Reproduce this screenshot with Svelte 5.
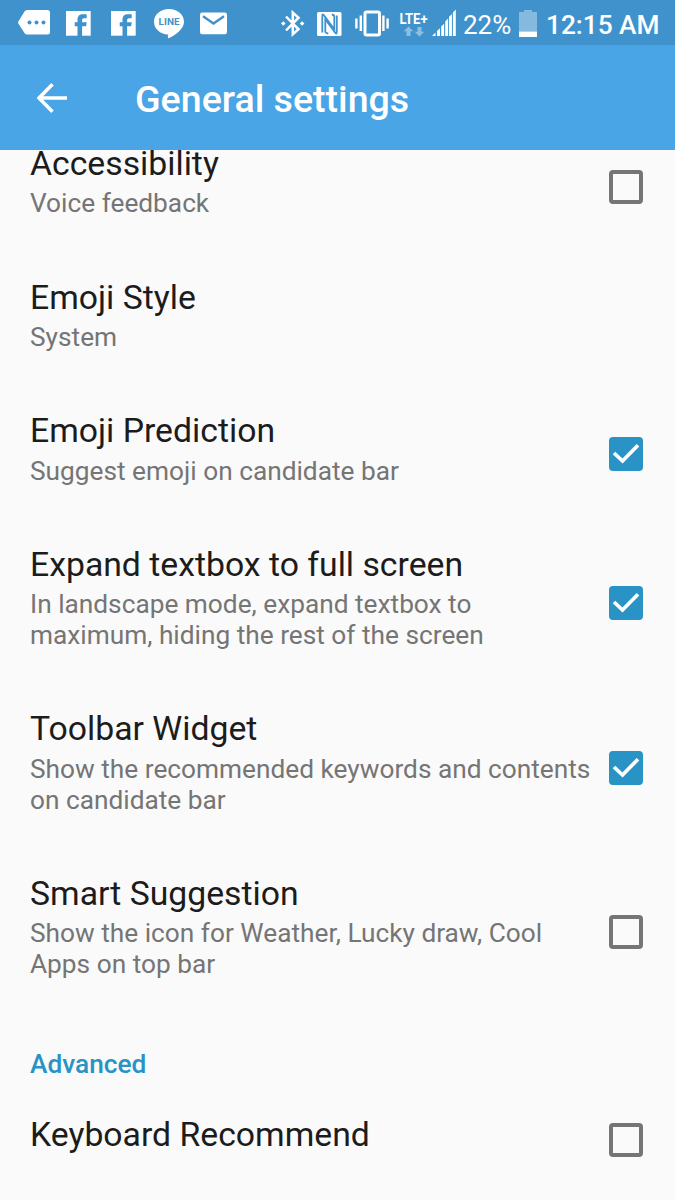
<script lang="ts">
  let settings = $state([
    { title: 'Accessibility', summary: 'Voice feedback', checked: false },
    { title: 'Emoji Style', summary: 'System' },
    { title: 'Emoji Prediction', summary: 'Suggest emoji on candidate bar', checked: true },
    { title: 'Expand textbox to full screen', summary: 'In landscape mode, expand textbox to\nmaximum, hiding the rest of the screen', checked: true },
    { title: 'Toolbar Widget', summary: 'Show the recommended keywords and contents\non candidate bar', checked: true },
    { title: 'Smart Suggestion', summary: 'Show the icon for Weather, Lucky draw, Cool\nApps on top bar', checked: false }
  ]);

  let advanced = $state([
    { title: 'Keyboard Recommend', summary: '', checked: false }
  ]);
</script>

{#snippet facebook()}
  <svg class="fb" width="25" height="45" viewBox="0 0 25 45">
    <rect y="11" width="24.700" height="24.700" fill="#fff" />
    <path fill="#3f92cc" d="M11.500 36V26.300H8.700v-4h2.800v-2.800c0-3.400 2-5.300 5.300-5.300h3.900v4h-2.500c-1.500 0-2.100.7-2.100 2v2.100h4.600l-.6 4h-4V36z" />
  </svg>
{/snippet}

{#snippet row(item)}
  <li class="row">
    <div class="text">
      <div class="title">{item.title}</div>
      {#if item.summary}
        <div class="summary">{item.summary}</div>
      {/if}
    </div>
    {#if item.checked !== undefined}
      <button
        class={["check", item.checked ? "on" : ""]}
        role="checkbox"
        aria-checked={item.checked}
        aria-label={item.title}
        onclick={() => item.checked = !item.checked}
      >
        {#if item.checked}
          <svg width="34" height="34" viewBox="0 0 34 34">
            <path fill="none" stroke="#fff" stroke-width="3.700" d="M5 16l8.500 8L29 8.200" />
          </svg>
        {/if}
      </button>
    {/if}
  </li>
{/snippet}

<div class="screen">
  <div class="status">
    <svg class="message" width="32" height="45" viewBox="18 0 32 45">
      <path fill="#fff" d="M27 10h20.500q2.500 0 2.500 2.500V32q0 2.500-2.500 2.500H27q-1.500 0-2.500-1.500l-6-9.300q-.8-1.200 0-2.400l6-9.800Q25.500 10 27 10z" />
      <g fill="#3f92cc"><circle cx="29.500" cy="22.500" r="2" /><circle cx="36.500" cy="22.500" r="2" /><circle cx="43.500" cy="22.500" r="2" /></g>
    </svg>
    {@render facebook()}
    {@render facebook()}
    <svg class="line" width="30" height="45" viewBox="154 0 30 45">
      <path fill="#fff" d="M169 9c8.500 0 15 5.600 15 12.700 0 7.500-8.500 13-14.800 16.300-1.700.8-1.300-.8-1.200-3.400C160 34 154 28.700 154 21.700 154 14.600 160.500 9 169 9z" />
      <text x="158.600" y="25.400" textLength="21" lengthAdjust="spacingAndGlyphs">LINE</text>
    </svg>
    <svg class="mail" width="27" height="45" viewBox="200 0 27 45">
      <rect x="200" y="12.500" width="27" height="21.700" rx="2.200" fill="#fff" />
      <path fill="none" stroke="#3f92cc" stroke-width="2.400" d="M203 16.200l10.500 7.300L224 16.200" />
    </svg>
    <svg class="bluetooth" width="24" height="45" viewBox="281 0 24 45">
      <path fill="none" stroke="#fff" stroke-width="2.500" d="M286 16.500l12.500 12.800-5.700 5V12.500l5.700 5.200L286 30.500" />
      <path fill="#fff" d="M281 23.500l2.300-2.300 2.300 2.300-2.300 2.300zM299.800 23.500l2.300-2.300 2.300 2.300-2.300 2.300z" />
    </svg>
    <svg class="nfc" width="25" height="45" viewBox="317 0 25 45">
      <rect x="317" y="12" width="24.500" height="24" rx="1.500" fill="#fff" />
      <path fill="none" stroke="#3f92cc" stroke-width="1.800" d="M322.300 32.500V16q0-3 2-.3l10 13.500V16.500q0-1.500-2.500-2" />
      <path fill="none" stroke="#3f92cc" stroke-width="1.800" d="M336.800 15.500V32q0 3-2 .3l-9.500-13V31.500q0 1.500 3 2" />
    </svg>
    <svg class="vibrate" width="34" height="45" viewBox="355 0 34 45">
      <rect x="365" y="12" width="14.500" height="23" rx="1.500" fill="none" stroke="#fff" stroke-width="3" />
      <path fill="none" stroke="#fff" stroke-width="2.400" d="M356.400 18.500v10M360.800 15.500v15.500M383.400 15.500v15.500M387.600 18.500v10" />
    </svg>
    <svg class="lte" width="30" height="45" viewBox="399 0 30 45">
      <text x="399.500" y="24" textLength="28" lengthAdjust="spacingAndGlyphs">LTE+</text>
      <path fill="#8dbfe2" d="M408.500 26.500l4.800 4.800h-2.800v4.700h-4v-4.700h-2.800zM419.500 36.500l4.800-4.800h-2.800V27h-4v4.700h-2.800z" />
    </svg>
    <svg class="signal" width="24" height="45" viewBox="432 0 24 45">
      <path fill="#fff" d="M432 36l3.500-3.500V36zM437 31l3-2.800V36h-3zM441.200 26.500l2.900-2.800V36h-2.900zM445.200 21.500l2.900-2.900V36h-2.900zM449 17l2.900-3V36H449zM452.900 12.500l2.900-3V36h-2.900z" />
    </svg>
    <span class="percent">22%</span>
    <svg class="battery" width="18" height="45" viewBox="519 0 18 45">
      <path fill="#85b9de" d="M524 10h8v2h5v19.500h-18V12h5z" />
      <path fill="#fff" d="M519 31.500h18V37h-18z" />
    </svg>
    <span class="time">12:15 AM</span>
  </div>

  <header>
    <button class="back" aria-label="Back">
      <svg width="30" height="30" viewBox="0 0 30 30">
        <path fill="none" stroke="#fff" stroke-width="3.500" d="M30 15H2.500M15.500 1.300L2 15l13.500 13.700" />
      </svg>
    </button>
    <h1>General settings</h1>
  </header>

  <main>
    <ul class="first">
      {#each settings as item}
        {@render row(item)}
      {/each}
    </ul>
    <h2>Advanced</h2>
    <ul>
      {#each advanced as item}
        {@render row(item)}
      {/each}
    </ul>
  </main>
</div>

<style>
  :global(body) {
    margin: 0;
    background: #fafafa;
  }

  .screen {
    width: 675px;
    height: 1200px;
    display: flex;
    flex-direction: column;
    overflow: hidden;
    font-family: Roboto, sans-serif;
    background: #fafafa;
  }

  svg {
    display: block;
    flex: none;
  }

  button {
    padding: 0;
    border: 0;
    background: none;
  }

  .status {
    flex: none;
    height: 45px;
    display: flex;
    color: #fff;
    background: #3f92cc;
    line-height: 51px;
    white-space: nowrap;

    .message { margin-left: 18px; }
    .fb { margin-left: 16px; }
    .fb + .fb { margin-left: 20px; }
    .line { margin-left: 18px; }
    .mail { margin-left: 16px; }
    .bluetooth { margin-left: 54px; }
    .nfc { margin-left: 12px; }
    .vibrate { margin-left: 13px; }
    .lte { margin-left: 10px; }
    .signal { margin-left: 3px; }
    .battery { margin-left: 8px; }

    .line text {
      font-size: 9.5px;
      font-weight: 700;
      fill: #3f92cc;
    }

    .lte text {
      font-size: 15.5px;
      line-height: 18px;
      font-weight: 700;
      fill: #fff;
    }
  }

  .percent {
    width: 48px;
    margin-left: 7px;
    font-size: 26px;
  }

  .time {
    margin-left: 9px;
    font-size: 26.25px;
    font-weight: 500;
  }

  header {
    flex: none;
    height: 105px;
    display: flex;
    align-items: center;
    background: #49a5e6;
    color: #fff;

    .back {
      margin: 0 68px 0 37px;
    }

    h1 {
      margin: 2px 0 0;
      font-size: 37.6px;
      font-weight: 500;
    }
  }

  main {
    flex: 1;
    min-height: 0;
    overflow: hidden;
  }

  ul {
    list-style: none;
    margin: 0;
    padding: 0;
  }

  .first {
    margin-top: -30.2px;
  }

  .row {
    display: flex;
    align-items: center;
    justify-content: space-between;
    padding: 24px 32px 24px 30px;
  }

  .text {
    padding-bottom: 10.4px;
  }

  .title {
    font-size: 33.75px;
    line-height: 39.5px;
    color: #1c1c1c;
    white-space: nowrap;
  }

  .summary {
    margin-top: 5px;
    font-size: 26.25px;
    line-height: 30.8px;
    color: #757575;
    white-space: pre;
  }

  .check {
    flex: none;
    box-sizing: border-box;
    width: 34px;
    height: 34px;
    border: 4px solid #757575;
    border-radius: 4px;

    &.on {
      border: 0;
      background: #2893c4;
    }
  }

  h2 {
    box-sizing: border-box;
    height: 76.5px;
    margin: 0;
    padding: 34.4px 30px 0;
    font-size: 26.25px;
    line-height: 30.8px;
    font-weight: 500;
    color: #2893c4;
  }
</style>
